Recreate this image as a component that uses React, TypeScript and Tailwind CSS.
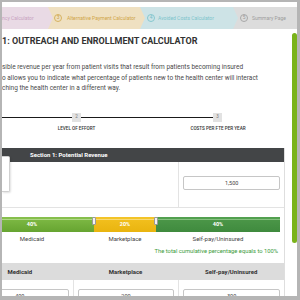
export default function App() {
  return (
    <div className="relative w-[300px] h-[300px] overflow-hidden bg-white border-[#b5b5b5] border-t-2 border-l-2 border-r-[3px] border-b-4 font-['Roboto','Liberation_Sans',sans-serif]">
      <Stepper />
      <div className="flex">
        <main className="w-[283px] flex-none">
          <h1 className="mt-[7px] text-[9px] leading-[11px] font-bold text-[#333] whitespace-nowrap">
            1: OUTREACH AND ENROLLMENT CALCULATOR
          </h1>
          <div className="mt-[15px] text-[6.5px] leading-[10.5px] text-[#4a4a4a] whitespace-nowrap">
            <p>sible revenue per year from patient visits that result from patients becoming insured</p>
            <p>o allows you to indicate what percentage of patients new to the health center will interact</p>
            <p>ching the health center in a different way.</p>
          </div>

          <div className="mt-[19px] flex items-center h-[9px]">
            <div className="w-[70px] h-px bg-[#1a1a1a]" />
            <Marker n="2" />
            <div className="w-[132px] h-px bg-[#1a1a1a]" />
            <Marker n="3" />
          </div>
          <div className="mt-[4px] flex text-[4.6px] leading-[6px] font-medium text-[#333] uppercase">
            <div className="w-[149px] text-center">Level of effort</div>
            <div className="w-[134px] text-center">Costs per FTE per year</div>
          </div>

          <section className="mt-[16px] ml-[-35px] w-[318px] border-r border-[#dedede]">
            <div className="h-[14px] bg-[#434547] pl-[63px] text-[6px] leading-[14px] font-bold text-white">
              Section 1: Potential Revenue
            </div>
            <div className="flex h-[46px] border-b border-[#e3e3e3]">
              <div className="w-[212px]" />
              <div className="w-[106px] border-l border-[#e3e3e3] flex items-center px-[4px] pb-[2px]">
                <Field value="1,500" />
              </div>
            </div>

            <div className="mt-[9px] ml-[3px] w-[310px]">
              <div className="relative flex h-[15px] text-[5.5px] leading-[15px] font-bold text-white text-center">
                <div className="w-[124px] bg-[linear-gradient(to_bottom,#86bf4c_0,#86bf4c_2px,#b0d787_2px,#b0d787_3.5px,#7ab641_3.5px,#66a431_100%)]">40%</div>
                <div className="w-[62px] bg-[linear-gradient(to_bottom,#f3c428_0,#f3c428_2px,#f8da74_2px,#f8da74_3.5px,#f1be1c_3.5px,#e9b40f_100%)]">20%</div>
                <div className="w-[124px] bg-[linear-gradient(to_bottom,#52a04f_0,#52a04f_2px,#86c080_2px,#86c080_3.5px,#4a9547_3.5px,#3f8a3e_100%)]">40%</div>
                <Handle left="left-[122px]" />
                <Handle left="left-[184px]" />
              </div>
              <div className="mt-[3px] flex text-[6px] leading-[8px] text-[#444] text-center">
                <div className="w-[124px]">Medicaid</div>
                <div className="w-[62px]">Marketplace</div>
                <div className="w-[124px]">Self-pay/Uninsured</div>
              </div>
            </div>
            <p className="mt-[4px] pr-[6px] text-right text-[5.8px] leading-[8px] text-[#3b9b3b]">
              The total cumulative percentage equals to 100%
            </p>

            <div className="mt-[8px] flex h-[17px] bg-[#dcdcdc] text-[6px] leading-[17px] font-bold text-[#333] text-center">
              <div className="w-[106px]">Medicaid</div>
              <div className="w-[106px]">Marketplace</div>
              <div className="w-[106px]">Self-pay/Uninsured</div>
            </div>
            <div className="flex">
              <div className="w-[106px] px-[4px] pt-[9px] pb-[8px]"><Field value="400" /></div>
              <div className="w-[106px] px-[4px] pt-[9px] pb-[8px] border-l border-[#e3e3e3]"><Field value="200" /></div>
              <div className="w-[106px] px-[4px] pt-[9px] pb-[8px] border-l border-[#e3e3e3]"><Field value="300" /></div>
            </div>
          </section>
        </main>
        <div className="ml-[7px] mt-[4px] w-[5px] h-[210px] rounded-full bg-[#7ab31a]" />
      </div>

      {/* half-hidden popover card at the left edge */}
      <div className="absolute left-0 top-[154px] w-[8px] h-[36px] bg-white border border-l-0 border-[#d0d0d0] rounded-r-[2px] shadow-[1px_1px_2px_rgba(0,0,0,0.12)]" />
    </div>
  );
}

function Stepper() {
  return (
    <div className="mt-[5px] flex h-[22px] text-[5px] leading-[22px] whitespace-nowrap">
      <Step bg="bg-[#e9dae5]" fill="#e9dae5" w="w-[46px]" z="z-30">
        <span className="text-[#c8a2c1]">ncy Calculator</span>
      </Step>
      <Step bg="bg-[#efe0c1]" fill="#efe0c1" w="w-[92px]" z="z-20">
        <Num n="3" tone="border-[#d6b260] text-[#c9a043]" ml="ml-[6px]" />
        <span className="ml-[5px] text-[#cfa548]">Alternative Payment Calculator</span>
      </Step>
      <Step bg="bg-[#cde3e6]" fill="#cde3e6" w="w-[93px]" z="z-10">
        <Num n="4" tone="border-[#86c8cf] text-[#72bdc6]" ml="ml-[7px]" />
        <span className="ml-[3px] text-[#7cc4cc]">Avoided Costs Calculator</span>
      </Step>
      <div className="flex-1 flex items-center bg-[#dcdcdc]">
        <Num n="5" tone="border-[#a8a8a8] text-[#9a9a9a]" ml="ml-[7px]" />
        <span className="ml-[4px] text-[#9d9d9d]">Summary Page</span>
      </div>
    </div>
  );
}

function Step({ bg, fill, w, z, children }: { bg: string; fill: string; w: string; z: string; children: React.ReactNode }) {
  return (
    <div className={`relative flex-none flex items-center ${w} ${bg} ${z}`}>
      {children}
      <svg className="absolute right-[-5px] top-0" width="5" height="22" viewBox="0 0 5 22">
        <polygon points="0,0 5,11 0,22" fill={fill} />
      </svg>
    </div>
  );
}

function Num({ n, tone, ml }: { n: string; tone: string; ml: string }) {
  return (
    <span className={`flex-none w-[8px] h-[8px] rounded-full border-[0.8px] flex items-center justify-center text-[4.8px] leading-none ${tone} ${ml}`}>
      {n}
    </span>
  );
}

function Marker({ n }: { n: string }) {
  return (
    <div className="w-[9px] h-[9px] bg-[#e2e2e2] flex items-center justify-center text-[4.5px] text-[#777]">{n}</div>
  );
}

function Handle({ left }: { left: string }) {
  return (
    <div className={`absolute top-0 ${left} w-[4px] h-[8px] rounded-[1px] bg-[#f2f2f2] border-[0.5px] border-[#9a9a9a]`} />
  );
}

function Field({ value }: { value: string }) {
  return (
    <div className="w-full h-[14px] border border-[#c6c6c6] rounded-[2px] bg-white text-center text-[5.5px] leading-[12px] text-[#444]">
      {value}
    </div>
  );
}
